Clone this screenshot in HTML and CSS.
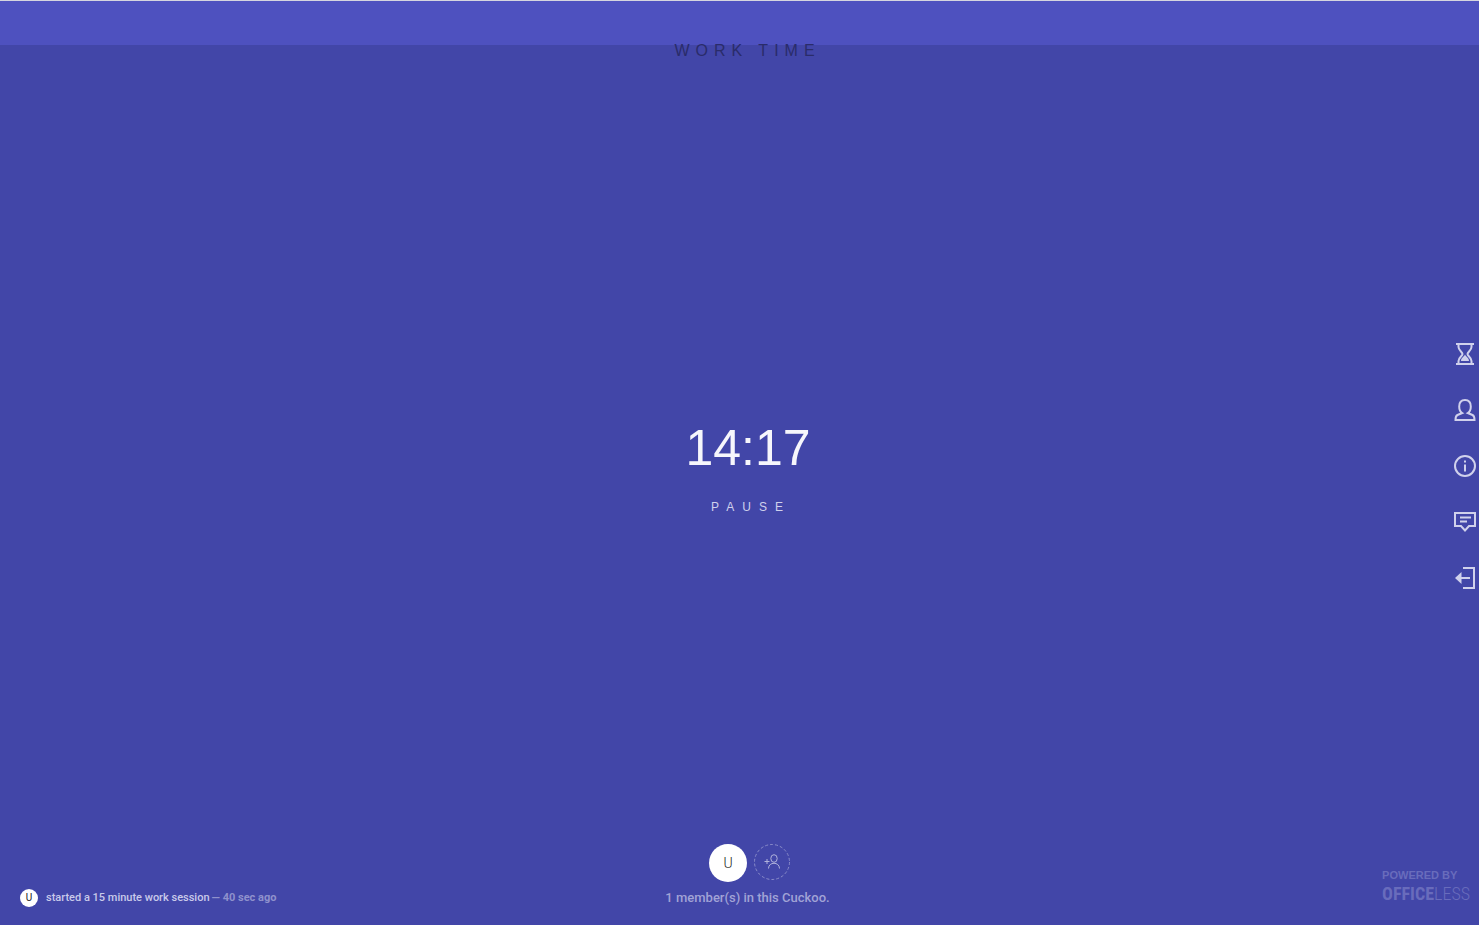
FILE: index.html
```html
<!DOCTYPE html>
<html lang="en">
<head>
<meta charset="utf-8">
<meta name="viewport" content="width=device-width, initial-scale=1">
<title>Cuckoo</title>
<link rel="stylesheet" href="styles.css">
</head>
<body>
<div class="progress"></div>
<h1 class="mode">WORK TIME</h1>
<main class="timer">
  <time class="clock">14:17</time>
  <button class="pause" type="button">PAUSE</button>
</main>
<nav class="side" aria-label="Session menu">
  <button type="button" aria-label="Sessions"><svg viewBox="0 0 24 24"><path d="M3 2h18M3 22h18M5.500 2v3c0 3.500 4 5 4 7s-4 3.500-4 7v3M18.500 2v3c0 3.500-4 5-4 7s4 3.500 4 7v3"/><path class="solid" d="M12 12.500c.5 2 4 3 4 6.500H8c0-3.500 3.500-4.500 4-6.500z"/></svg></button>
  <button type="button" aria-label="Profile"><svg viewBox="0 0 24 24"><path d="M12 2c-3.800 0-5.800 2.500-5.800 6.500 0 3.300 1.300 5.500 3 6.500L4.500 17c-1.500.7-2 1.700-2 5h19c0-3.300-.5-4.300-2-5l-4.700-2c1.700-1 3-3.200 3-6.500 0-4-2-6.500-5.800-6.500z"/></svg></button>
  <button type="button" aria-label="Information"><svg viewBox="0 0 24 24"><circle cx="12" cy="12" r="10"/><path d="M12 10.500V17.500M12 6.500v2"/></svg></button>
  <button type="button" aria-label="Feedback"><svg viewBox="0 0 24 24"><path d="M2 3h20v13h-6l-4 4.500L8 16H2zM7 7.500h11M7 11.500h7"/></svg></button>
  <button type="button" aria-label="Leave"><svg viewBox="0 0 24 24"><path d="M10 2h11v20H10M7 12h10"/><path class="solid" d="M8.500 6v12L2 12z"/></svg></button>
</nav>
<footer class="footer">
  <p class="activity"><span class="avatar avatar-small">U</span><span class="event">started a 15 minute work session</span><span class="ago">— 40 sec ago</span></p>
  <section class="members">
    <div class="people">
      <span class="avatar">U</span>
      <button class="invite" type="button" aria-label="Invite a member"><svg class="ring" viewBox="0 0 36 36"><circle cx="18" cy="18" r="17.500"/></svg><svg class="person" viewBox="0 0 18 18"><ellipse cx="11" cy="5.500" rx="3.200" ry="3.800"/><path d="M5.500 15.500c0-7 11-7 11 0M1.500 8.500h5M4 6v5"/></svg></button>
    </div>
    <p class="count">1 member(s) in this Cuckoo.</p>
  </section>
  <a class="powered" href="#"><span class="by">POWERED BY</span><span class="brand"><b>OFFICE</b>LESS</span></a>
</footer>
</body>
</html>
```
FILE: styles.css
```css
* { box-sizing: border-box; }
body {
  margin: 0;
  min-height: 100vh;
  display: grid;
  grid-template-columns: 1fr auto;
  grid-template-rows: 45px auto 1fr auto;
  background: #4246a8;
  color: #fff;
  font-family: "Liberation Sans", Arial, sans-serif;
}
h1, p { margin: 0; }
button { padding: 0; border: 0; background: none; color: inherit; font: inherit; cursor: pointer; }
svg { display: block; fill: none; stroke: currentColor; }
.progress { grid-column: 1 / -1; background: #4e51bf; border-top: 1px solid #d5d5df; }
.mode {
  grid-column: 1 / -1;
  margin-top: -4px;
  padding-left: 16px;
  font-size: 16px;
  line-height: 20px;
  font-weight: 400;
  letter-spacing: 6px;
  text-align: center;
  color: #2a2c6a;
}
.timer {
  grid-column: 1;
  padding: 28px 0 0 43px;
  display: flex;
  flex-direction: column;
  align-items: center;
  justify-content: center;
  gap: 20px;
}
.clock { font-size: 50px; line-height: 60px; color: #f6f6fc; }
.pause { margin-left: 6px; font-size: 12px; line-height: 18px; letter-spacing: 8px; color: #d0d1ec; }
.side {
  grid-column: 2;
  padding: 26px 2px 0 0;
  display: flex;
  flex-direction: column;
  justify-content: center;
  gap: 32px;
  color: #d0d1ec;
}
.side svg { width: 24px; height: 24px; stroke-width: 2; }
.solid { fill: currentColor; stroke: none; }
.footer {
  grid-column: 1 / -1;
  padding: 0 9px 18px 20px;
  display: grid;
  grid-template-columns: 1fr auto 1fr;
  align-items: end;
}
.avatar {
  width: 38px;
  height: 38px;
  border-radius: 50%;
  display: grid;
  place-items: center;
  background: #fff;
  color: #222;
  font-family: Roboto, sans-serif;
  font-weight: 300;
  font-size: 14px;
}
.activity { display: flex; align-items: center; font: 500 11px/18px Roboto, sans-serif; }
.avatar-small { width: 18px; height: 18px; margin-right: 8px; font-size: 10px; font-weight: 400; }
.event { color: #c9caea; }
.ago { margin-left: 2px; color: #8f91cc; font-weight: 700; }
.members { padding-left: 5px; display: flex; flex-direction: column; align-items: center; gap: 7px; }
.people { padding-left: 4px; display: flex; align-items: flex-start; gap: 7px; }
.invite { width: 36px; height: 36px; display: grid; place-items: center; color: #b1b3dc; }
.ring, .person { grid-area: 1 / 1; }
.ring { width: 36px; height: 36px; stroke: #898bc9; stroke-dasharray: 3 2; }
.person { width: 18px; height: 18px; }
.count { font: 500 13px/18px Roboto, sans-serif; color: #a1a3d6; }
.powered { justify-self: end; display: flex; flex-direction: column; color: #696cbc; text-decoration: none; }
.by { font-size: 11px; line-height: 12px; font-weight: 700; }
.brand { font-family: "Roboto Condensed", "Liberation Sans", sans-serif; font-size: 18px; line-height: 26px; font-weight: 300; }
.brand b { font-weight: 700; }
```
